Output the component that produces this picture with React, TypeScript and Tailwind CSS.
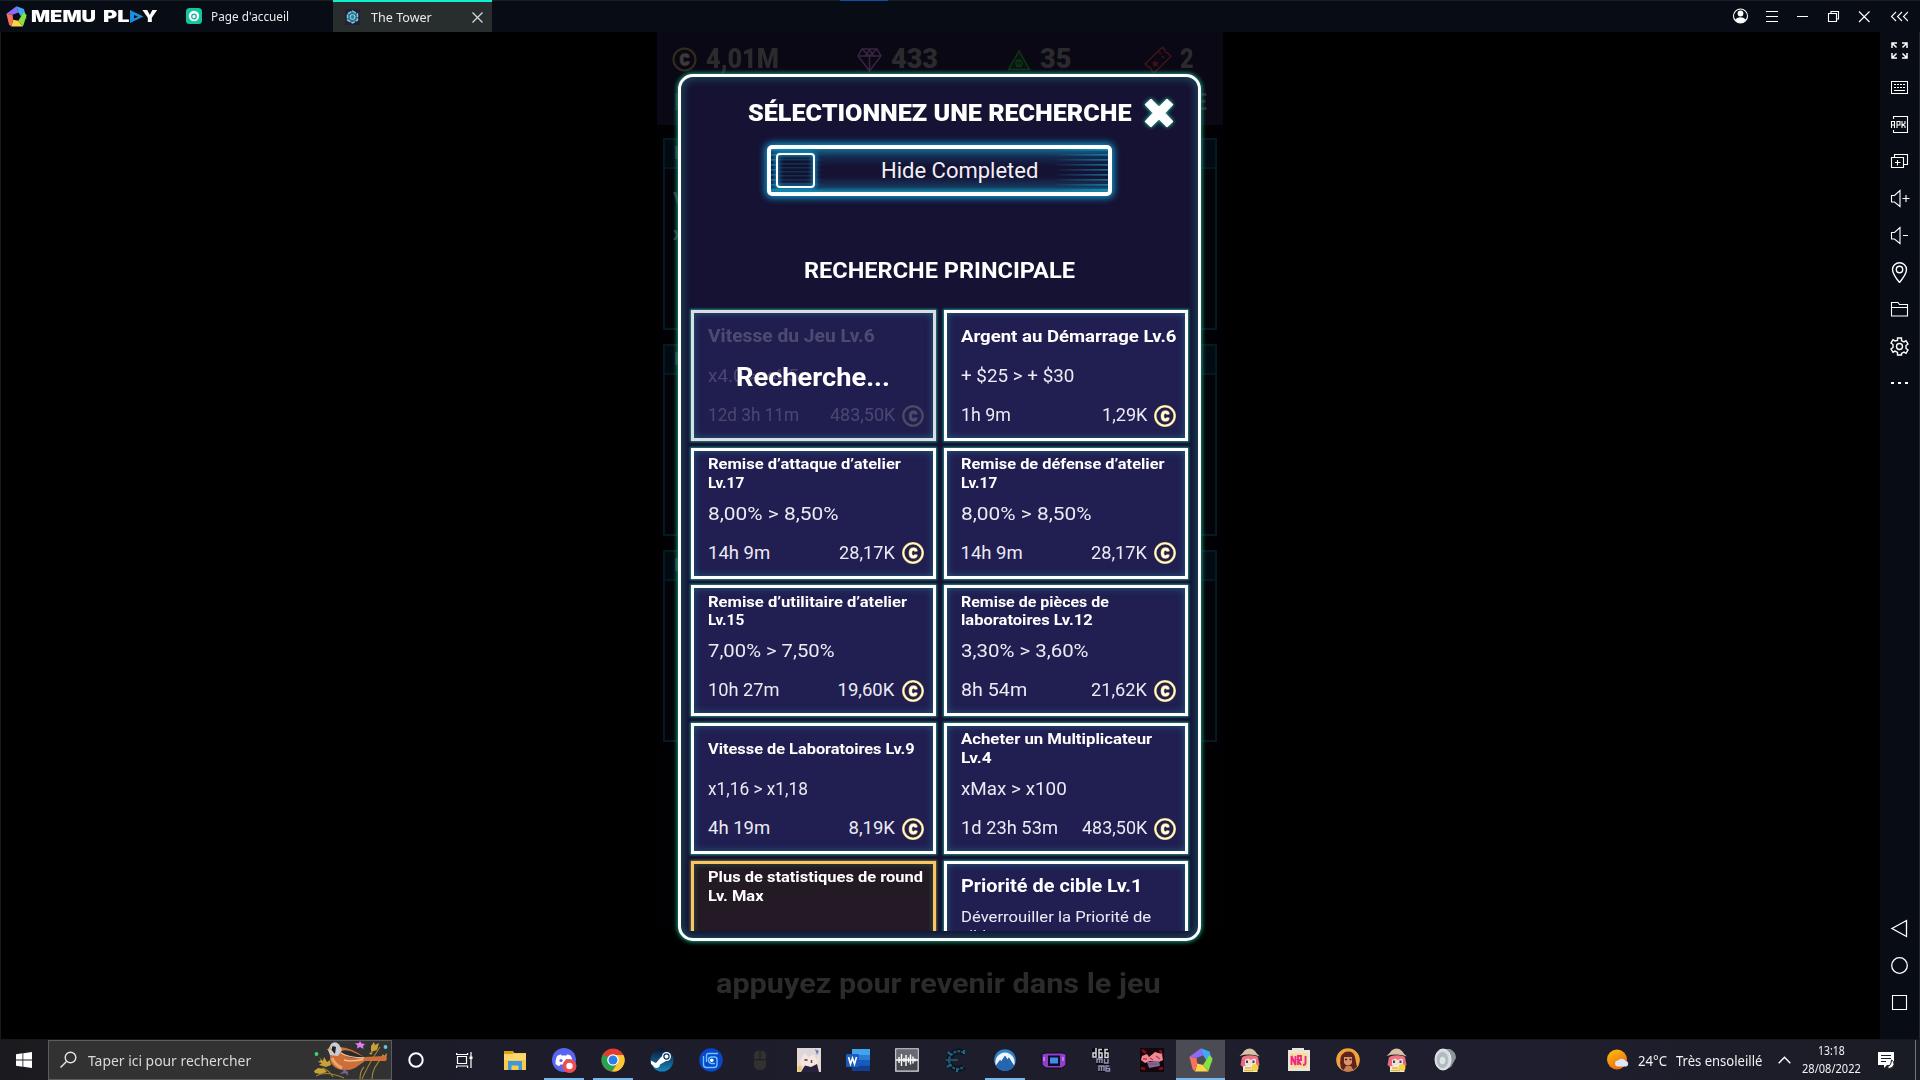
import React, { useLayoutEffect, useRef, useState } from "react";

/* Text stretched horizontally to an exact width. */
function Fit({ w, className = "", children }: { w: number; className?: string; children: React.ReactNode }) {
  const ref = useRef<HTMLSpanElement>(null);
  const [scale, setScale] = useState(1);
  useLayoutEffect(() => {
    if (ref.current) setScale(w / ref.current.offsetWidth);
  }, [w]);
  return (
    <span className={"block shrink-0 whitespace-nowrap " + className} style={{ width: w }}>
      <span ref={ref} className="inline-block origin-left align-top" style={{ transform: `scaleX(${scale})` }}>
        {children}
      </span>
    </span>
  );
}

function Pentagon({ size }: { size: number }) {
  return (
    <svg width={size} height={size} viewBox="0 0 24 24">
      <path d="M.4 8.800 12 .2 14.200 7.300 7.500 9.900Z" fill="#8a6cf7" />
      <path d="M12 .2 20.500 3.500 23.500 14.500 17.200 12 14.200 7.300Z" fill="#3fa9f5" />
      <path d="M23.600 10.500 19.500 23 14 16.900 17.200 12 20.500 7Z" fill="#86e23c" />
      <path d="M19.500 23.500 6 23.500 8.200 15.600 14 16.900Z" fill="#f8d648" />
      <path d="M6 23.500 3.500 21 .4 8.800 7.500 9.900 8.200 15.600Z" fill="#f8705e" />
    </svg>
  );
}

function TitleBar() {
  return (
    <header className="flex h-8 shrink-0 items-stretch border-t border-[#191f22] bg-[#080c14] text-[13px] text-[#e8eaec]">
      <div className="flex w-[175px] items-center pb-px pl-[6px]">
        <Pentagon size={21} />
        <Fit w={65} className="ml-1 font-[Inter] text-[16px] font-black leading-5 text-white">MEMU</Fit>
        <Fit w={27} className="ml-[7px] font-[Inter] text-[16px] font-black leading-5 text-white">PL</Fit>
        <svg width="14" height="13" viewBox="0 0 14 13">
          <path d="M0 0 13.500 6.500 0 13Z" fill="#1b8fdc" />
          <path d="M4 5 8 6.800 4 8.500Z" fill="#080c14" />
        </svg>
        <Fit w={15} className="-ml-[2px] font-[Inter] text-[16px] font-black leading-5 text-white">Y</Fit>
      </div>
      <div className="flex w-[158px] items-center pb-px pl-[11px]">
        <svg width="16" height="16" viewBox="0 0 16 16">
          <rect width="16" height="16" rx="3.500" fill="#13c6a0" />
          <circle cx="8" cy="8" r="5.200" fill="#fff" />
          <circle cx="8" cy="8.500" r="2.300" fill="none" stroke="#13b596" strokeWidth="1.300" />
        </svg>
        <Fit w={78} className="ml-[9px] mt-[2px]">Page d'accueil</Fit>
      </div>
      <div className="-mt-px flex w-[159px] items-center border-t-2 border-[#10efd0] bg-[#282d2e] pb-px pl-[12px]">
        <svg width="15" height="16" viewBox="0 0 15 16">
          <rect width="15" height="16" fill="#281c38" />
          <path d="M7.500 2 12.500 5V11L7.500 14 2.500 11V5Z" fill="#2b6b80" stroke="#6fd0e0" strokeWidth="1.500" strokeDasharray="4 1" />
          <circle cx="7.500" cy="8" r="2.500" fill="#3a7d98" stroke="#8fe3ee" />
        </svg>
        <Fit w={61} className="ml-[11px] mt-[2px]">The Tower</Fit>
        <svg className="ml-[40px] mt-px" width="11" height="11" viewBox="0 0 11 11" stroke="#d5d8d8" strokeWidth="1.300">
          <path d="M.5.5l10 10M10.500.5l-10 10" />
        </svg>
      </div>
      <div className="flex flex-1 items-start pl-[348px]">
        <div className="-mt-px h-px w-12 bg-[#0a4fa8]" />
      </div>
      <div className="flex items-center pb-px pr-[12px]">
        <svg width="176" height="18" viewBox="0 0 176 18" fill="none" stroke="#fff" strokeWidth="1.100">
          <circle cx="8.500" cy="9" r="7" />
          <circle cx="8.500" cy="6.500" r="2.900" fill="#fff" stroke="none" />
          <path d="M3 12.500Q8.500 8 14 12.500 11.500 16 8.500 16 5.500 16 3 12.500Z" fill="#fff" stroke="none" />
          <path d="M34 4.500h12M34 9.500h12M34 14.500h12M65 9.500h11" shapeRendering="crispEdges" />
          <path d="M96.500 6.500h8v8h-8zM99 6V4.500h7.500V12H105" />
          <path d="M127 4.500l10.500 10.500M137.500 4.500L127 15M164 5l-4.500 4.500L164 14M170 5l-4.500 4.500L170 14M176 5l-4.500 4.500L176 14" />
        </svg>
      </div>
    </header>
  );
}

const sideIcons: React.ReactNode[] = [
  <path key="f" strokeWidth="1.500" d="M3 8V3h5M3 3l4.500 4.500M13 3h5v5M18 3l-4.500 4.500M3 13v5h5M3 18l4.500-4.500M18 13v5h-5M18 18l-4.500-4.500" />,
  <g key="k" shapeRendering="crispEdges"><path d="M2.500 4.500h16v12h-16z" /><path d="M5 7.500h12M5 10.500h12" strokeDasharray="2 1" /><path d="M5 13.500h11" /></g>,
  <g key="a"><path d="M4.500 5V2.500h14v16h-14V16" /><path d="M2.500 14V7.500h3V14M2.500 11h3M8 14V7.500h3V11H8M13 7v7M16 7v2.500l-2.500 1.500L16 12v2" /></g>,
  <path key="p" d="M2.500 6.500h12v10h-12zM5.500 6V3.500h13v10H15M8.500 9v5.500M6 11.500h5.500" />,
  <path key="u" d="M2.500 7.500h3l5.500-5v16l-5.500-4.500h-3zM13.500 10.500h7M17 7v7" />,
  <path key="d" d="M2.500 7.500h3l5.500-5v16l-5.500-4.500h-3zM14 10.500h5" />,
  <g key="l" strokeWidth="1.400"><path d="M10.500 20.500Q3.500 12 3.500 7.500a7 6.800 0 0 1 14 0Q17.500 12 10.500 20.500Z" /><circle cx="10.500" cy="7.500" r="3.200" /></g>,
  <path key="o" d="M2.500 3.500h6.500l1.500 2h8v11.500h-16zM2.500 8.500h16" />,
  <g key="g" strokeWidth="1.400"><path d="M8.500 4.500V2h4v2.500l2.500 1.400 2-1.200 2 3.400-2 1.400v3l2 1.400-2 3.400-2-1.200-2.500 1.400V19h-4v-2.500L6 15.100l-2 1.200-2-3.400 2-1.400v-3L2 7.100l2-3.400 2 1.200Z" /><circle cx="10.500" cy="10.500" r="3" /></g>,
  <path key="m" strokeWidth="2" d="M2 10h3M9 10h3M16 10h3" />,
];

const navIcons: React.ReactNode[] = [
  <path key="b" strokeWidth="1.300" d="M17.500 2.500v16L3 10.500Z" />,
  <circle key="h" strokeWidth="1.300" cx="10.500" cy="10.500" r="7.800" />,
  <path key="s" d="M3.500 3.500h14v14h-14z" />,
];

function SideIcon({ children }: { children: React.ReactNode }) {
  return (
    <div className="flex h-[37px] items-center justify-center">
      <svg width="21" height="21" viewBox="0 0 21 21" fill="none" stroke="#fff" strokeWidth="1.100">{children}</svg>
    </div>
  );
}

function SideBar() {
  return (
    <aside className="flex w-10 shrink-0 flex-col justify-between border-r border-[#23272c] bg-[#080c14]">
      <div>{sideIcons.map((icon, i) => <SideIcon key={i}>{icon}</SideIcon>)}</div>
      <div className="mb-[18px]">{navIcons.map((icon, i) => <SideIcon key={i}>{icon}</SideIcon>)}</div>
    </aside>
  );
}

function Coin({ className = "", dim = false }: { className?: string; dim?: boolean }) {
  const c = "M14 9.300Q13.800 7 11.500 7 8.400 7 8.400 11T11.500 15Q13.800 15 14 12.700";
  return (
    <svg className={className} width="22" height="22" viewBox="0 0 22 22" fill="none">
      <circle cx="11" cy="11" r="9.700" stroke="#d8bb4a" strokeWidth={dim ? 1.8 : 2.6} />
      {!dim && <circle cx="11" cy="11" r="9.700" stroke="#fffbe6" strokeWidth="1.500" />}
      <path d={c} stroke="#cfae45" strokeWidth="3.600" />
      <path d={c} stroke="#fffbe6" strokeWidth="2.600" />
    </svg>
  );
}

/* Dimmed lab screen behind the dialog. */
function LabPanel({ lines = [], className }: { lines?: string[]; className: string }) {
  return (
    <div className={"flex flex-col border-2 border-[#031a22] bg-[#030308] " + className}>
      <div className="flex h-[29px] items-center border-b-2 border-[#031720] bg-[#030b12] pl-[9px] text-[19px] font-bold text-[#2a3333]">L</div>
      <div className="flex flex-col pl-2 pt-3 text-[19px] leading-[35px] text-[#333838]">
        {lines.map((l) => <span key={l}>{l}</span>)}
      </div>
    </div>
  );
}

function LabScreen() {
  return (
    <div className="flex h-full w-[566px] flex-col bg-[#010103] font-[Roboto] font-bold text-[#2b2b2d]">
      <div className="h-[93px] bg-[#0a0814]">
        <div className="flex h-[55px] items-center pl-[15px] text-[27px] font-black leading-[55px]">
          <Coin className="h-[25px] w-[25px] opacity-20" dim />
          <Fit w={73} className="ml-[9px]">4,01M</Fit>
          <svg className="ml-[78px]" width="25" height="26" viewBox="0 0 25 26" fill="none" stroke="#3a2440" strokeWidth="1.500">
            <path d="M5 2h15l4 7-11.500 15L1 9ZM1 9h23M5 2l7.500 7L20 2M12.500 9v15M8 9l4.500-6 4.500 6" />
          </svg>
          <Fit w={47} className="ml-[9px]">433</Fit>
          <svg className="ml-[69px]" width="24" height="22" viewBox="0 0 24 22" fill="none" stroke="#0f3119" strokeWidth="1.600">
            <path d="M12 2 22.500 20.500H1.500Z" fill="#07150c" /><circle cx="12" cy="14" r="3" /><path d="M9 17.500h6M12 12v4" />
          </svg>
          <Fit w={31} className="ml-[9px]">35</Fit>
          <svg className="ml-[73px]" width="28" height="28" viewBox="0 0 28 28" fill="none" stroke="#441318" strokeWidth="1.500">
            <path d="M18.500 1 21 4q-.5 3 3 3.200l3 3L10 27l-3-3q.5-3-3-3.200L1 18ZM15 6l2 2M18 10l2 2" strokeLinejoin="round" />
            <path d="M11 14l1 2.500 3-.3-2 2 1 2.600-2.500-1.300L9 21l.6-2.800-2-1.700 2.600-.2Z" fill="#441318" stroke="none" />
          </svg>
          <Fit w={14} className="ml-[8px]">2</Fit>
        </div>
        <div className="flex justify-between pl-[17px] pr-[16px] text-[23px] leading-[32px]"><span>L</span><span>E</span></div>
      </div>
      <LabPanel className="mx-[6px] mt-[13px] h-[192px]" lines={["V", "x"]} />
      <LabPanel className="mx-[6px] mt-[14px] h-[192px]" />
      <LabPanel className="mx-[6px] mt-[14px] h-[192px]" />
      <div className="mt-auto flex h-[110px] flex-col bg-black pl-[59px]">
        <Fit w={445} className="pt-[33px] text-[28px] leading-[44px] text-[#2b2b2b]">appuyez pour revenir dans le jeu</Fit>
      </div>
    </div>
  );
}

type Line = [string, number];
type Research = {
  title: Line[];
  size?: "md" | "lg";
  stat?: Line;
  desc?: Line[];
  time?: Line;
  cost?: Line;
  state?: "busy" | "max";
};

const researches: Research[] = [
  { title: [["Vitesse du Jeu Lv.6", 167]], size: "lg", stat: ["x4.0 > x4.5", 91], time: ["12d 3h 11m", 91], cost: ["483,50K", 65], state: "busy" },
  { title: [["Argent au Démarrage Lv.6", 215]], size: "md", stat: ["+ $25 > + $30", 113], time: ["1h 9m", 50], cost: ["1,29K", 45] },
  { title: [["Remise d’attaque d’atelier", 193], ["Lv.17", 36]], stat: ["8,00% > 8,50%", 131], time: ["14h 9m", 62], cost: ["28,17K", 56] },
  { title: [["Remise de défense d’atelier", 204], ["Lv.17", 36]], stat: ["8,00% > 8,50%", 131], time: ["14h 9m", 62], cost: ["28,17K", 56] },
  { title: [["Remise d’utilitaire d’atelier", 199], ["Lv.15", 36]], stat: ["7,00% > 7,50%", 127], time: ["10h 27m", 72], cost: ["19,60K", 57] },
  { title: [["Remise de pièces de", 148], ["laboratoires Lv.12", 132]], stat: ["3,30% > 3,60%", 128], time: ["8h 54m", 66], cost: ["21,62K", 56] },
  { title: [["Vitesse de Laboratoires Lv.9", 207]], stat: ["x1,16 > x1,18", 100], time: ["4h 19m", 62], cost: ["8,19K", 46] },
  { title: [["Acheter un Multiplicateur", 191], ["Lv.4", 31]], stat: ["xMax > x100", 106], time: ["1d 23h 53m", 97], cost: ["483,50K", 65] },
  { title: [["Plus de statistiques de round", 215], ["Lv. Max", 56]], state: "max" },
  { title: [["Priorité de cible Lv.1", 181]], size: "lg", desc: [["Déverrouiller la Priorité de", 190], ["cible", 34]] },
];

const titleSize = { sm: "text-[15px]", md: "text-[17px]", lg: "text-[19px]" };

function Card({ r }: { r: Research }) {
  const busy = r.state === "busy";
  const look =
    r.state === "max"
      ? "border-[#fbc566] bg-[#231a26] shadow-[0_0_2px_1px_#5f6a3a,inset_0_0_5px_1px_#2f4434]"
      : busy
        ? "border-[#dcdde2] bg-[#201d4f] shadow-[0_0_2px_1px_#1f8a82,inset_0_0_7px_0px_#235e7c]"
        : "border-white bg-[#211f52] shadow-[0_0_2px_1px_#1f8a82,inset_0_0_7px_0px_#235e7c]";
  return (
    <div className={"relative h-[131px] border-[3px] pl-[14px] pr-[9px] " + look}>
      <div className={busy ? "opacity-20" : ""}>
        <div className="flex h-[46px] flex-col justify-center font-bold text-white">
          {r.title.map(([t, w]) => (
            <Fit key={t} w={w} className={"leading-[18.700px] " + titleSize[r.size ?? "sm"]}>{t}</Fit>
          ))}
        </div>
        <div className="flex h-[34px] flex-col justify-center text-[18.500px] text-[#eceaf3]">
          {r.stat && <Fit w={r.stat[1]} className="leading-[34px]">{r.stat[0]}</Fit>}
          {r.desc?.map(([t, w]) => <Fit key={t} w={w} className="text-[15.500px] leading-[18.700px]">{t}</Fit>)}
        </div>
        {r.time && r.cost && (
          <div className="flex h-[45px] items-center justify-between text-[18.500px] leading-[45px] text-[#eceaf3]">
            <Fit w={r.time[1]}>{r.time[0]}</Fit>
            <div className="flex items-center gap-[7px]">
              <Fit w={r.cost[1]}>{r.cost[0]}</Fit>
              <Coin />
            </div>
          </div>
        )}
      </div>
      {busy && (
        <div className="absolute left-[42px] top-[44px] font-bold text-white">
          <Fit w={154} className="text-[26px] leading-[40px]">Recherche...</Fit>
        </div>
      )}
    </div>
  );
}

function ResearchDialog() {
  return (
    <section className="flex h-[867px] w-[523px] flex-col items-center rounded-[15px] border-[3px] border-white bg-[#151233] font-[Roboto] shadow-[0_0_4px_1px_#1c9c80,inset_0_0_9px_2px_#1b4a5c]">
      <div className="flex h-[68px] w-full shrink-0 items-center pl-[67px]">
        <Fit w={383} className="pt-[3px] text-[23.500px] font-black leading-9 text-white">SÉLECTIONNEZ UNE RECHERCHE</Fit>
        <svg className="ml-[10px] mt-[4px] drop-shadow-[0_0_2px_#1fd8a8]" width="36" height="34" viewBox="0 0 36 34">
          <path d="M10 3.500 18 11.500 26 3.500 31.500 8.500 23.500 17 31.500 25.500 26 30.500 18 22.500 10 30.500 4.500 25.500 12.500 17 4.500 8.500Z" fill="#fff" stroke="#fff" strokeWidth="1.500" strokeLinejoin="round" />
        </svg>
      </div>
      <div className="relative flex h-[51px] w-[345px] shrink-0 items-center rounded-[5px] border-[4px] border-white bg-[linear-gradient(180deg,#14678a_0%,#152a50_18%,#151233_40%,#151233_65%,#15395e_88%,#1787aa_100%)] pl-[5px] shadow-[0_0_7px_2px_#1098cf]">
        <div className="absolute inset-y-0 right-0 w-[56px] bg-[repeating-linear-gradient(180deg,#1ba7d0_0px,#1ba7d0_1px,transparent_2.500px,transparent_5px)] opacity-60 [mask-image:linear-gradient(90deg,transparent,black)]" />
        <div className="absolute inset-y-0 left-0 w-[56px] bg-[repeating-linear-gradient(180deg,#1ba7d0_0px,#1ba7d0_1px,transparent_2.500px,transparent_5px)] opacity-50 [mask-image:linear-gradient(270deg,transparent,black)]" />
        <div className="relative h-[35px] w-[39px] rounded-[4px] border-2 border-white bg-[repeating-linear-gradient(180deg,#123050_0px,#123050_1px,#141130_2px,#141130_4px)] shadow-[0_0_5px_1px_#1098cf,inset_0_0_5px_1px_#167fae]" />
        <Fit w={157} className="relative ml-[66px] pt-px text-[22px] leading-10 text-[#eef0f6]">Hide Completed</Fit>
      </div>
      <div className="mt-[4px] flex h-[731px] w-[508px] shrink-0 flex-col items-center overflow-hidden px-[5px]">
        <Fit w={271} className="mt-[50px] text-[22.500px] font-bold leading-10 text-white">RECHERCHE PRINCIPALE</Fit>
        <div className="mt-[20px] grid w-[497px] grid-cols-2 gap-x-[8px] gap-y-[6.700px]">
          {researches.map((r, i) => <Card key={i} r={r} />)}
        </div>
      </div>
    </section>
  );
}

function Chara() {
  return (
    <>
      <path d="M4 9 2.500 17 6 20H18L21.500 17 20 9Z" fill="#e86a7c" />
      <path d="M7 8h11v9q-5.500 3-11 0Z" fill="#f8ddd3" />
      <path d="M5 8.500Q12 6 19.500 8.500V12L16 10.500 13 12 10 10.500 6 12.500Z" fill="#ee7484" />
      <path d="M1.500 8Q5 5.500 6.500 2.500 12-1.500 17 3 19 6.500 22 8.500 12 5 1.500 8Z" fill="#d8c3a5" />
      <path d="M9 12.500v2.500M15.500 12.500v2.500" stroke="#25477e" strokeWidth="2" />
      <path d="M5 18.500Q12 15.500 19 18L19.500 24H5Z" fill="#f4ecd8" />
      <circle cx="17" cy="19.500" r="3.500" fill="#f3d343" />
      <path d="M7 20h6M6 22.500h9" stroke="#dfb63e" strokeWidth="1.500" />
    </>
  );
}

type TaskApp = { icon: React.ReactNode; open?: boolean; active?: boolean };
const apps: TaskApp[] = [
  { icon: <><path d="M1 3h9l1 2h12v17H1Z" fill="#f8cb50" /><path d="M1 3h9v3H1Z" fill="#e0a00c" /><path d="M1 6h22v6H1Z" fill="#fdd76c" /><path d="M5 22V13h14v9h-3.500v-4.500h-7V22Z" fill="#3b98dc" /></> },
  { open: true, icon: <><circle cx="12" cy="12" r="12" fill="#5865f2" /><path d="M5 8Q8 6 9 6.500L9.500 7.500h5L15 6.500Q17 6 19 8 21 12 20.500 16 18 18 16.500 18L15.500 16.500h-7L7.500 18Q5.500 18 3.500 16 3.500 11 5 8Z" fill="#fff" /><circle cx="9" cy="12.500" r="1.600" fill="#5865f2" /><circle cx="15" cy="12.500" r="1.600" fill="#5865f2" /><circle cx="17.500" cy="18" r="7" fill="#ed4c50" /><circle cx="17.500" cy="18" r="3.200" fill="#fff" /></> },
  { open: true, icon: <><circle cx="12" cy="12" r="11.500" fill="#e33b2e" /><path d="M12 12 2 6.300A11.500 11.500 0 0 0 11 23.500L17 14Z" fill="#2aa14c" /><path d="M12 12 17 14.500 11 23.500A11.500 11.500 0 0 0 22.500 7H12Z" fill="#fcc934" /><circle cx="12" cy="12" r="5.800" fill="#fff" /><circle cx="12" cy="12" r="4.500" fill="#2f7de9" /></> },
  { icon: <><defs><linearGradient id="steam" x2="0" y2="1"><stop stopColor="#0c1638" /><stop offset="1" stopColor="#1488bc" /></linearGradient></defs><circle cx="12" cy="12" r="11.500" fill="url(#steam)" /><circle cx="16.500" cy="8.500" r="4.500" fill="#fff" /><circle cx="16.500" cy="8.500" r="2.600" fill="none" stroke="#14315c" strokeWidth="1.200" /><path d="M.8 12.500 6 15 11.500 8.500 16 13 10 16.500A3.600 3.600 0 0 1 3 17.500L1 16Z" fill="#fff" /></> },
  { icon: <><circle cx="12" cy="12" r="11.800" fill="#0b45c8" /><path d="M7.500 14V7.500q0-2 2-2H19M4.500 8v8.500q0 3 3 3H15q3 0 3-3V11.500q0-2.500-2.500-2.500H12.500q-3 0-3 3t3 3.500h3.500" fill="none" stroke="#65c9ff" strokeWidth="1.400" /><circle cx="12.800" cy="12.200" r="1.800" fill="#fff" /></> },
  { icon: <><path d="M6 11V7q0-4.500 5.500-4.500V11ZM18 11V7q0-4.500-5.500-4.500V11ZM6 12.200h12V17q0 5-6 5t-6-5Z" fill="#32312f" /></> },
  { icon: <><path d="M0 0h24v24H0Z" fill="#e4d9cc" /><path d="M2 10Q4 2 12 2t10 8L20 17Q12 22 4 17Z" fill="#f1e6e0" /><path d="M5 10h14v6q-7 5-14 0Z" fill="#fbe5da" /><path d="M3 13 7 5 12 9 17 6 20 13 22 4 16 0H6L1 6Z" fill="#ddd6da" /><path d="M7.500 12.500q1.500-1.500 3 0M14.500 12v3" stroke="#3c4a72" strokeWidth="1.500" fill="none" /><path d="M4 24 8 17.500 14 19 20 16 22 24Z" fill="#262140" /><path d="M0 20 3 17 5 22 2 24Z" fill="#e9c75a" /><path d="M18 1 22 3 20 7Z" fill="#5a86c4" /></> },
  { icon: <><path d="M6 1h18v22H6Z" fill="#2b7cd3" /><path d="M6 1h18v6H6Z" fill="#41a5ee" /><path d="M6 12h18v5.500H6Z" fill="#185abd" /><path d="M6 17.500h18V23H6Z" fill="#103f91" /><rect y="6" width="13" height="13" rx="1" fill="#1a5cbe" /><path d="M2.500 9 4.500 16 6.500 10 8.500 16 10.500 9" fill="none" stroke="#fff" strokeWidth="1.600" /></> },
  { icon: <><path d="M.8.8h22.400v22.400H.8Z" fill="#45474f" stroke="#d9dadd" strokeWidth="1.300" /><path d="M1.500 1.500h21V11h-21Z" fill="#686a73" /><path d="M1 12h22M4 9v6M6.500 6v12M9 10v4M11 7v11M13.500 9.500v5M15.500 6.500v10M18 8.500v7M20 10.500v3" stroke="#fff" strokeWidth="1.400" /></> },
  { icon: <><path d="M20 5Q16 2 11 4 5 7 5 13 6 20 13 21 18 21 20 18" fill="none" stroke="#0c0f17" strokeWidth="5" /><path d="M20 5Q16 2 11 4 5 7 5 13 6 20 13 21 18 21 20 18" fill="none" stroke="#1c5876" strokeWidth="2.500" strokeDasharray="3 1" /><path d="M2 12h12" stroke="#1c5876" strokeWidth="1.800" /><path d="M20 2v4M4 4l3 3M3 19l4-3M13 21v3" stroke="#1b6a8a" strokeWidth="2" /></> },
  { open: true, icon: <><circle cx="12" cy="12" r="10.800" fill="#2f83cd" /><path d="M3 17.500A9.600 9.600 0 1 1 21 17.500L15.800 9.500 14.500 11.500 12 7.800 8 13.800 7.200 11.800Z" fill="#f2f6fa" /><path d="M3 17.500 7.200 11.800 8 13.800 12 7.800 14.500 11.500 15.800 9.500 21 17.500Q18 22.800 12 22.800T3 17.500Z" fill="#2566ae" /></> },
  { icon: <><path d="M0 6 4 5H20L24 6V17L20 20H4L0 17Z" fill="#8c41c9" stroke="#12091f" /><path d="M6 7.500h12V18H6Z" fill="#150b28" /><path d="M8 9.500h8v6H8Z" fill="#3c8fe8" /><path d="M2 9v4M21 9v4" stroke="#cf86f5" strokeWidth="1.500" /></> },
  { icon: <g fill="none"><path d="M1 0h17v10H1ZM5 9h13v8H5ZM7 16h12v8H7Z" fill="#0a0a10" /><path stroke="#d8d8dc" strokeWidth="1.500" d="M5 0v9H2V5h3M11 1.500H8v8h3V5H8M17 1.500h-3v8h3V5h-3" /><path stroke="#8f90b5" strokeWidth="1.500" d="M6 15v-4h5v4M8.500 11v4M13.500 11v4h3.500v-4M8 23v-5h5v5M10.500 18v5M18.500 18H15v5h3.500v-2.500H15" /></g> },
  { icon: <><path d="M0 0h24v24H0Z" fill="#160509" /><path d="M2 2l4 3M20 2l2 5M1 20l4 1M19 21l4-1" stroke="#8a0f1e" strokeWidth="2.500" /><path d="M2 8 7 6 9 9 15 4 22 6 23 12 19 14 10 13 5 15 1 12Z" fill="#f08a94" /><path d="M7 14 19 13 20 18 9 20Z" fill="#6a73a8" /><path d="M3 11h4M10 10l3 2M16 8l4 3M8 16h9" stroke="#c23a54" strokeWidth="1.400" /></> },
  { active: true, icon: <Pentagon size={24} /> },
  { icon: <Chara /> },
  { icon: <><path d="M1 2h4V0h12v2h6v21H1Z" fill="#ece5da" /><path d="M3.500 5h17v15h-17Z" fill="#f8dc9a" /><path d="M4.500 17V8l4 9V8M11 17V8h3v4h-3l3 5M18.500 8v7q0 2-2.500 2" fill="none" stroke="#ee2a86" strokeWidth="1.900" /></> },
  { icon: <><circle cx="12" cy="12" r="11.800" fill="#f2a23a" /><path d="M5 20Q2 8 9 4 17 2 19 9L21 19 16 23H8Z" fill="#5f2420" /><path d="M8 9h8v6q-4 5-8 0Z" fill="#dd9468" /><path d="M9 11.500h2M13.500 11.500h2" stroke="#3a1518" strokeWidth="1.300" /><path d="M7 23 10 18h5l3 5Z" fill="#c98056" /></> },
  { icon: <Chara /> },
  { icon: <><path d="M8 1 16 1Q22 4 22 10L17 19 11 22Z" fill="#8e969c" /><ellipse cx="9" cy="11.500" rx="8" ry="10.500" fill="#d6dcdf" stroke="#eef1f2" /><ellipse cx="8.500" cy="12" rx="5.800" ry="8" fill="#b3bbc0" /><ellipse cx="8.500" cy="12.500" rx="2.800" ry="3.800" fill="#dfe6e9" /></> },
];

function Bird() {
  return (
    <svg width="77" height="38" viewBox="0 0 77 38" fill="none">
      <path d="M8 27Q14 28 19 36M2 35Q12 29 30 37M48 38Q54 24 66 6M58 38Q58 26 70 15M50 26Q46 30 46 38" stroke="#a3852b" strokeWidth="1.100" />
      <path d="M5 16l4 4 1-4 3 5 3-2 1 5-5 2-7-2 3-2-4-1 3-2ZM0 30l4-3 6 1 3 3-7 2-5-1ZM57 5l3-4 1 3 4-2-2 7-6 2ZM66 18l3-5 1 2 3-3-1 6-5 2ZM55 12l4-1-2 3Z" fill="#c9a237" />
      <path d="M16 14Q15 24 24 28 33 31 41 27L51 20 72 20 73 17 71 15 50 16Q38 7 26 6Z" fill="#cf6f38" />
      <path d="M18 17Q21 24 28 27" stroke="#eba66f" strokeWidth="3" />
      <path d="M27 10Q34 8 41 12L50 16 42 17Q30 17 27 10Z" fill="#2a292c" />
      <path d="M27 12Q34 16.500 50 17M30 19Q38 21 49 18.500" stroke="#eac4a0" strokeWidth="1.300" />
      <path d="M14 9 17 3Q21-.5 25 3.500L28 9 24 15 16 14Z" fill="#c8ccd4" />
      <path d="M18.500 5 22 6 21 13 17.500 9Z" fill="#1f2024" /><path d="M17 6 12.500 9 17 9Z" fill="#eda23b" />
      <path d="M29 28 34 34M33 28l-5 4 6-1" stroke="#7b6796" strokeWidth="1.300" />
      <path d="M46 0l1.500 2.500L51 3l-2 2 .5 3L46 6l-3 1.500.5-3-2.500-2L45 2Z" fill="#e37cf5" />
      <circle cx="2.500" cy="13" r="1.900" fill="#46d36b" /><circle cx="71.500" cy="6" r="1.900" fill="#5cc8e8" />
    </svg>
  );
}

function TaskBar() {
  return (
    <footer className="flex h-[41px] shrink-0 items-stretch border-t border-[#15171a] bg-[linear-gradient(90deg,#1b1b1f_0%,#1c1c2a_25%,#1d1d2c_55%,#1f1e2e_80%,#1a1c24_100%)] text-[#f1f1f3]">
      <div className="flex w-12 items-center justify-center">
        <svg width="16" height="16" viewBox="0 0 16 16" fill="#fff">
          <path d="M0 2.300 6.500 1.300V7.500H0ZM7.300 1.200 16 0V7.500H7.300ZM0 8.400H6.500V14.700L0 13.700ZM7.300 8.400H16V16L7.300 14.800Z" />
        </svg>
      </div>
      <div className="flex w-[344px] items-center border border-[#5c5c5c] bg-[#323232]">
        <svg className="ml-[11px]" width="17" height="18" viewBox="0 0 17 18" fill="none" stroke="#e6e6e6" strokeWidth="1.400">
          <circle cx="10.500" cy="6.500" r="5.300" /><path d="M6.500 10.500.5 16.500" />
        </svg>
        <Fit w={163} className="ml-[11px] text-[15px] leading-6 text-[#d9d9d9]">Taper ici pour rechercher</Fit>
        <div className="ml-auto"><Bird /></div>
      </div>
      <div className="flex w-[48px] items-center justify-center">
        <svg width="18" height="18" viewBox="0 0 18 18"><circle cx="9" cy="9" r="6.700" fill="none" stroke="#fff" strokeWidth="2" /></svg>
      </div>
      <div className="flex w-[48px] items-center justify-center">
        <svg width="17" height="17" viewBox="0 0 17 17" fill="none" stroke="#fff" strokeWidth="1.200">
          <path d="M1.500 4.500h9v7h-9zM.6 1v1.500h11V1M.6 16v-2h11v2M15 0v16" /><path d="M13.500 4.500h3v2.500h-3z" fill="#fff" stroke="none" />
        </svg>
      </div>
      <div className="ml-[2px] flex">
        {apps.map((a, i) => (
          <div key={i} className={"relative flex w-[49px] justify-center pt-[8px] " + (a.active ? "bg-[#4b4b54]" : "")}>
            <svg className="overflow-visible" width="24" height="24" viewBox="0 0 24 24">{a.icon}</svg>
            {a.open && <div className="absolute bottom-0 h-[2px] w-10 bg-[#76b9ed]" />}
            {a.active && <div className="absolute bottom-0 h-[2px] w-full bg-[#76b9ed]" />}
          </div>
        ))}
      </div>
      <div className="ml-auto flex items-center">
        <svg width="23" height="22" viewBox="0 0 23 22">
          <defs><linearGradient id="sun" x2=".5" y2="1"><stop stopColor="#fdc50e" /><stop offset="1" stopColor="#ef6c0f" /></linearGradient></defs>
          <circle cx="10" cy="10.500" r="10" fill="url(#sun)" />
          <path d="M11 17.500a3 3 0 0 1 0-6 4.500 4.500 0 0 1 7.500.3 3 3 0 0 1 1 5.700Z" fill="#dbe6f6" />
        </svg>
        <Fit w={29} className="ml-[8px] text-[15px] leading-6">24°C</Fit>
        <Fit w={86} className="ml-[9px] text-[15px] leading-6">Très ensoleillé</Fit>
        <svg className="ml-[16px]" width="13" height="8" viewBox="0 0 13 8" fill="none" stroke="#fff" strokeWidth="1.400"><path d="M.7 7.300 6.500 1.300 12.300 7.300" /></svg>
        <div className="ml-[11px] flex flex-col items-center text-[12px] leading-[18px]">
          <Fit w={27}>13:18</Fit>
          <Fit w={59}>28/08/2022</Fit>
        </div>
        <svg className="ml-[17px]" width="17" height="17" viewBox="0 0 17 17">
          <path d="M0 0h16v13H9l-3 3v-3H0Z" fill="#fff" />
          <path d="M3 3.500h10M3 6.500h10M3 9.500h5" stroke="#1c1d28" strokeWidth="1.100" />
          <path d="M13.500 8q3 1 2.500 4.500-1 4-5 4l-2-2q4 0 4.500-6.500Z" fill="#fff" stroke="#1c1d28" strokeWidth="1" />
        </svg>
        <div className="ml-[20px] mr-[4px] h-10 w-px bg-[#75767d]" />
      </div>
    </footer>
  );
}

export default function App() {
  return (
    <div className="flex h-[1080px] w-[1920px] flex-col overflow-hidden bg-black font-['Noto_Sans',sans-serif]">
      <TitleBar />
      <main className="flex h-[1007px] shrink-0 border-l border-[#181c1f]">
        <div className="relative flex-1 pl-[656px]">
          <LabScreen />
          <div className="absolute left-[677px] top-[42px]">
            <ResearchDialog />
          </div>
        </div>
        <SideBar />
      </main>
      <TaskBar />
    </div>
  );
}
